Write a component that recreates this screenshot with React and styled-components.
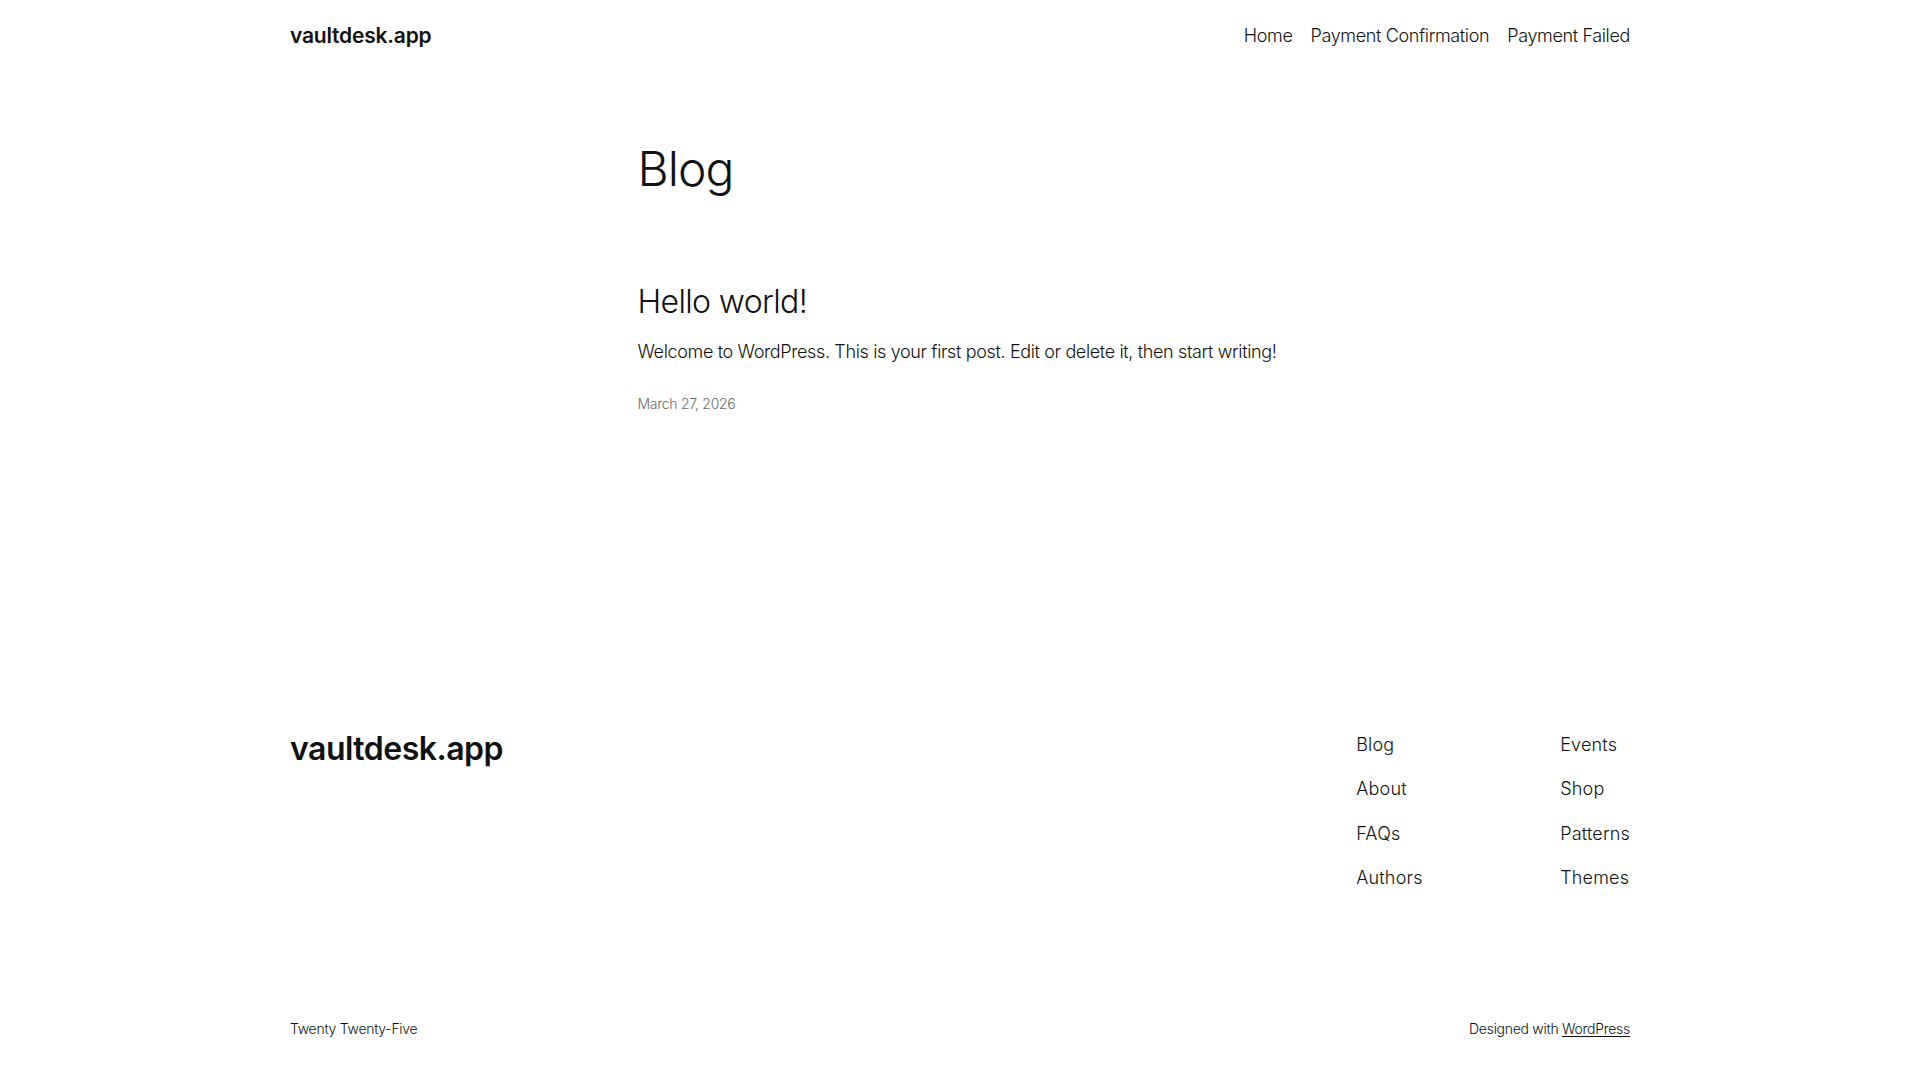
import styled, { createGlobalStyle } from "styled-components";

const GlobalStyle = createGlobalStyle`
    html, body {
        margin: 0;
        padding: 0;
        background: #ffffff;
    }
    body {
        font-family: Inter, "Noto Sans", sans-serif;
        font-weight: 300;
        color: #111111;
        -webkit-font-smoothing: antialiased;
    }
    a {
        color: inherit;
        text-decoration: none;
    }
`;

const Page = styled.div`
    min-height: 1080px;
    display: flex;
    flex-direction: column;
`;

const Wide = styled.div`
    width: 1340px;
    margin: 0 auto;
`;

const Header = styled(Wide)`
    height: 72px;
    display: flex;
    align-items: center;
    justify-content: space-between;
`;

const SiteTitle = styled.a`
    font-size: ${(p) => (p.$big ? "32px" : "21px")};
    font-weight: 600;
    letter-spacing: ${(p) => (p.$big ? "-0.5px" : "-0.2px")};
    line-height: 1.1;
`;

const Nav = styled.nav`
    display: flex;
    gap: 18px;
`;

const NavLink = styled.a`
    font-size: 18px;
    letter-spacing: -0.02em;
    line-height: 1.4;
`;

const Main = styled.main`
    width: 645px;
    margin: 0 auto;
    padding-top: 70px;
    flex: 1;
`;

const Title = styled.h1`
    margin: 0;
    font-size: 48px;
    font-weight: 300;
    letter-spacing: -0.02em;
    line-height: 1.125;
`;

const Post = styled.article`
    margin-top: 87px;
`;

const PostTitle = styled.h2`
    margin: 0;
    font-size: 32px;
    font-weight: 300;
    letter-spacing: -0.02em;
    line-height: 1.2;
`;

const Excerpt = styled.p`
    margin: 17px 0 0;
    font-size: 18px;
    letter-spacing: -0.02em;
    line-height: 1.5;
`;

const PostDate = styled.time`
    display: block;
    margin-top: 30px;
    font-size: 14px;
    color: #6b6b6b;
    letter-spacing: -0.02em;
`;

const Footer = styled(Wide)``;

const FooterTop = styled.div`
    display: flex;
    justify-content: space-between;
    align-items: flex-start;
`;

const FooterNav = styled.div`
    display: flex;
    padding-top: 1px;
`;

const FooterColumn = styled.ul`
    list-style: none;
    margin: 0;
    padding: 0;
    width: ${(p) => p.$width || "auto"};
    display: flex;
    flex-direction: column;
    gap: 18.5px;
`;

const FooterLink = styled.a`
    display: block;
    font-size: 18px;
    letter-spacing: 0.01em;
    line-height: 26px;
`;

const FooterBottom = styled.div`
    display: flex;
    justify-content: space-between;
    align-items: center;
    margin-top: 129px;
    padding-bottom: 43px;
    font-size: 14px;
    letter-spacing: -0.02em;
`;

const Underlined = styled.a`
    text-decoration: underline;
    text-underline-offset: 2px;
`;

export default function App() {
    return (
        <Page>
            <GlobalStyle />
            <Header as="header">
                <SiteTitle href="#">vaultdesk.app</SiteTitle>
                <Nav>
                    <NavLink href="#">Home</NavLink>
                    <NavLink href="#">Payment Confirmation</NavLink>
                    <NavLink href="#">Payment Failed</NavLink>
                </Nav>
            </Header>
            <Main>
                <Title>Blog</Title>
                <Post>
                    <PostTitle>
                        <a href="#">Hello world!</a>
                    </PostTitle>
                    <Excerpt>
                        Welcome to WordPress. This is your first post. Edit or
                        delete it, then start writing!
                    </Excerpt>
                    <PostDate>March 27, 2026</PostDate>
                </Post>
            </Main>
            <Footer as="footer">
                <FooterTop>
                    <SiteTitle href="#" $big>
                        vaultdesk.app
                    </SiteTitle>
                    <FooterNav>
                        <FooterColumn $width="204px">
                            <li><FooterLink href="#">Blog</FooterLink></li>
                            <li><FooterLink href="#">About</FooterLink></li>
                            <li><FooterLink href="#">FAQs</FooterLink></li>
                            <li><FooterLink href="#">Authors</FooterLink></li>
                        </FooterColumn>
                        <FooterColumn>
                            <li><FooterLink href="#">Events</FooterLink></li>
                            <li><FooterLink href="#">Shop</FooterLink></li>
                            <li><FooterLink href="#">Patterns</FooterLink></li>
                            <li><FooterLink href="#">Themes</FooterLink></li>
                        </FooterColumn>
                    </FooterNav>
                </FooterTop>
                <FooterBottom>
                    <span>Twenty Twenty-Five</span>
                    <span>
                        Designed with <Underlined href="#">WordPress</Underlined>
                    </span>
                </FooterBottom>
            </Footer>
        </Page>
    );
}
